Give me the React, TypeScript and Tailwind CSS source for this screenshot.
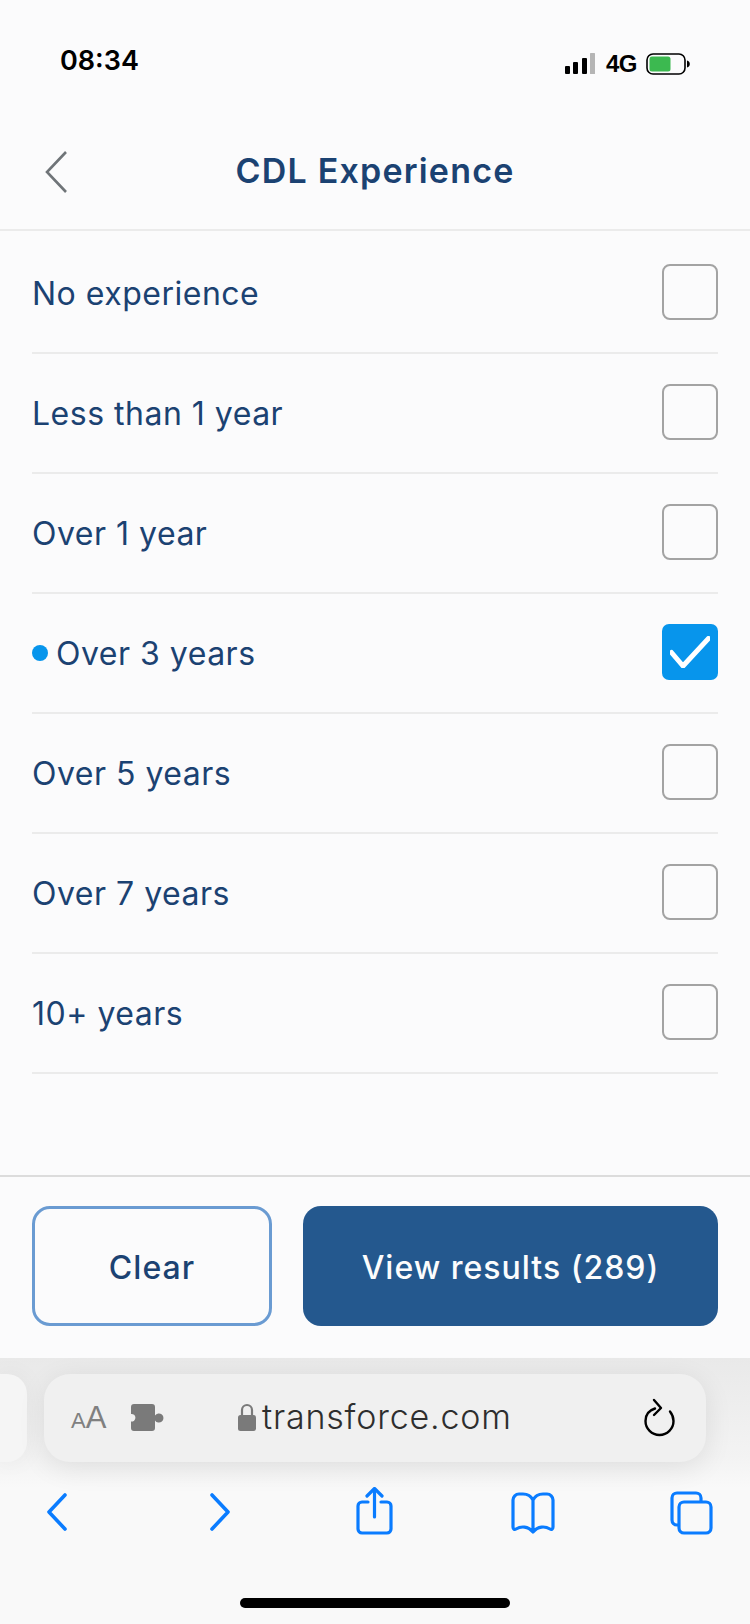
const options = [
  { label: "No experience" },
  { label: "Less than 1 year" },
  { label: "Over 1 year" },
  { label: "Over 3 years", checked: true },
  { label: "Over 5 years" },
  { label: "Over 7 years" },
  { label: "10+ years" },
];

const font = "font-['Inter','Noto_Sans',sans-serif]";

function StatusBar() {
  return (
    <div className="flex h-[115px] items-start justify-between pl-[60px] pr-[60px] pt-[44px]">
      <span className="font-['Inter',sans-serif] text-[27px] leading-[34px] font-semibold text-black">08:34</span>
      <div className="flex items-center pt-[6px]">
        <svg width="31" height="22" viewBox="0 0 31 22">
          <rect x="0" y="13" width="5" height="8" rx="1" fill="#000" />
          <rect x="8" y="9" width="5" height="12" rx="1" fill="#000" />
          <rect x="17" y="5" width="5" height="16" rx="1" fill="#000" />
          <rect x="25" y="0" width="5" height="21" rx="0.5" fill="#b5b5b5" />
        </svg>
        <span className="ml-[10px] font-['Liberation_Sans',sans-serif] text-[24px] leading-[28px] font-bold tracking-[-0.5px] text-black">4G</span>
        <svg className="ml-[9px]" width="44" height="22" viewBox="0 0 44 22">
          <rect x="1" y="1" width="38" height="20" rx="6" fill="none" stroke="#000" strokeWidth="1.6" />
          <rect x="3.5" y="3.5" width="21" height="15" rx="2.5" fill="#3cb950" />
          <path d="M41 7.5c1.8.4 2.8 1.8 2.8 3.5s-1 3.1-2.8 3.5z" fill="#000" />
        </svg>
      </div>
    </div>
  );
}

function Header() {
  return (
    <div className="relative flex h-[116px] items-center justify-center border-b-2 border-[#ebebeb] pb-[2px]">
      <svg className="absolute left-[44px] top-[35px]" width="24" height="44" viewBox="0 0 24 44">
        <path d="M22 2 3 22l19 20" fill="none" stroke="#6f7478" strokeWidth="2.6" />
      </svg>
      <h1 className={`${font} text-[34px] leading-[40px] font-semibold tracking-[1.2px] text-[#1b4272]`}>CDL Experience</h1>
    </div>
  );
}

function Row({ label, checked }: { label: string; checked?: boolean }) {
  return (
    <div className="flex h-[120px] items-center justify-between border-b-2 border-[#ebebeb]">
      <div className="flex items-center">
        {checked && <span className="mr-[8px] h-4 w-4 rounded-full bg-[#0795ec]" />}
        <span className={`${font} mt-[2px] text-[32px] leading-[40px] font-normal tracking-[0.5px] text-[#1b4272]`}>{label}</span>
      </div>
      {checked ? (
        <div className="mb-[2px] flex h-[56px] w-[56px] items-center justify-center rounded-[7px] bg-[#0795ec]">
          <svg width="40" height="32" viewBox="0 0 40 32">
            <path d="M1.500 16.500l11.500 13.500L38.500 2.500" fill="none" stroke="#fff" strokeWidth="5" strokeLinecap="round" strokeLinejoin="round" />
          </svg>
        </div>
      ) : (
        <div className="mb-[2px] h-[56px] w-[56px] rounded-[8px] border-2 border-[#a3a3a3]" />
      )}
    </div>
  );
}

function Actions() {
  return (
    <div className="flex gap-[31px] border-t-2 border-[#dcdcdc] px-[32px] pt-[29px] pb-[32px]">
      <button className={`${font} h-[120px] w-[240px] rounded-[18px] border-[3.5px] border-[#6a9bd2] pt-[3px] text-[32px] font-medium tracking-[1.1px] text-[#1b4272]`}>Clear</button>
      <button className={`${font} h-[120px] flex-1 rounded-[18px] bg-[#24588e] pt-[3px] text-[32px] font-medium tracking-[1px] text-[#fcfcfc]`}>View results (289)</button>
    </div>
  );
}

function UrlBar() {
  return (
    <div className="relative h-[104px] pt-[16px]">
      <div className="absolute left-0 top-[16px] h-[88px] w-[27px] rounded-r-[20px] bg-[#f5f5f5] shadow-[0_0_24px_rgba(0,0,0,0.05)]" />
      <div className="relative z-10 mx-[44px] flex h-[88px] w-[662px] items-center rounded-[26px] bg-[#f0f0f0] shadow-[0_6px_28px_rgba(0,0,0,0.09)]">
        <span className="absolute left-[27px] top-[28px] flex items-baseline font-['Liberation_Sans',sans-serif] leading-none text-[#808080]">
          <span className="text-[22px]">A</span>
          <span className="text-[31px]">A</span>
        </span>
        <svg className="absolute left-[87px] top-[30px]" width="34" height="28" viewBox="0 0 34 28">
          <path
            d="M3 0h18a3 3 0 0 1 3 3v8.500a4.600 4.600 0 1 1 0 5V24a3 3 0 0 1-3 3H3a3 3 0 0 1-3-3v-6.500a3.800 3.800 0 1 0 0-7.500V3a3 3 0 0 1 3-3z"
            fill="#7a7a7a"
          />
        </svg>
        <svg className="absolute left-[194px] top-[29px]" width="18" height="28" viewBox="0 0 18 28">
          <path d="M4 13V7a5 5 0 0 1 10 0v6" fill="none" stroke="#7a7a7a" strokeWidth="2.2" />
          <rect x="0" y="12" width="18" height="16" rx="2.5" fill="#7a7a7a" />
        </svg>
        <span className={`${font} absolute left-[218px] top-[21px] text-[34px] leading-[44px] font-light tracking-[0.8px] text-[#2e2e2e]`}>transforce.com</span>
        <svg className="absolute left-[598px] top-[24px]" width="36" height="40" viewBox="0 0 36 40">
          <path d="M13 10.500C6.500 12.500 3.500 17.500 3.500 23a14 14 0 0 0 28 0c0-4-1.500-7-3.500-9.500" fill="none" stroke="#000" strokeWidth="2.4" strokeLinecap="round" />
          <path d="M12 2l7 8-7 7" fill="none" stroke="#000" strokeWidth="2.4" strokeLinecap="round" strokeLinejoin="round" />
        </svg>
      </div>
    </div>
  );
}

function Toolbar() {
  const blue = "#0a7cff";
  return (
    <div className="relative h-[162px]">
      <div className="flex items-start pl-[46px] pt-[18px]">
        <svg className="mt-[13px]" width="22" height="38" viewBox="0 0 22 38">
          <path d="M19 2 3 19l16 17" fill="none" stroke={blue} strokeWidth="3.6" strokeLinecap="round" strokeLinejoin="round" />
        </svg>
        <svg className="ml-[141px] mt-[13px]" width="22" height="38" viewBox="0 0 22 38">
          <path d="M3 2l16 17L3 36" fill="none" stroke={blue} strokeWidth="3.6" strokeLinecap="round" strokeLinejoin="round" />
        </svg>
        <svg className="ml-[125px] mt-[7px]" width="38" height="48" viewBox="0 0 38 48">
          <path d="M12 15H6a4 4 0 0 0-4 4v23a4 4 0 0 0 4 4h25a4 4 0 0 0 4-4V19a4 4 0 0 0-4-4h-6" fill="none" stroke={blue} strokeWidth="3.2" strokeLinecap="round" />
          <path d="M18.500 30V2M11 9l7.500-7.500L26 9" fill="none" stroke={blue} strokeWidth="3.2" strokeLinecap="round" strokeLinejoin="round" />
        </svg>
        <svg className="ml-[116px] mt-[11px]" width="46" height="44" viewBox="0 0 46 44">
          <path
            d="M23 9c-2-4-5.500-6-10-6H9a6 6 0 0 0-6 6v27c0 2 1.500 3 3 2 5-3 12-3 17 3 5-6 12-6 17-3 1.500 1 3 0 3-2V9a6 6 0 0 0-6-6h-4c-4.500 0-8 2-10 6zm0 0v30"
            fill="none"
            stroke={blue}
            strokeWidth="3.2"
            strokeLinejoin="round"
          />
        </svg>
        <svg className="ml-[114px] mt-[11px]" width="44" height="44" viewBox="0 0 44 44">
          <path d="M9 34H7a5 5 0 0 1-5-5V7a5 5 0 0 1 5-5h19a5 5 0 0 1 5 5v3" fill="none" stroke={blue} strokeWidth="3.2" />
          <rect x="9" y="11" width="32" height="31" rx="5" fill="none" stroke={blue} strokeWidth="3.2" />
        </svg>
      </div>
      <div className="absolute bottom-[16px] left-[240px] h-[10px] w-[270px] rounded-full bg-black" />
    </div>
  );
}

export default function App() {
  return (
    <div className="flex h-[1624px] w-[750px] flex-col overflow-hidden bg-[#fbfbfc]">
      <StatusBar />
      <Header />
      <div className="flex-1 px-[32px] pt-[3px]">
        {options.map((o) => (
          <Row key={o.label} label={o.label} checked={o.checked} />
        ))}
      </div>
      <Actions />
      <div className="bg-[linear-gradient(to_bottom,#e9e9e9_0px,#f3f3f3_100px,#f9f9f9_130px)]">
        <UrlBar />
        <Toolbar />
      </div>
    </div>
  );
}
